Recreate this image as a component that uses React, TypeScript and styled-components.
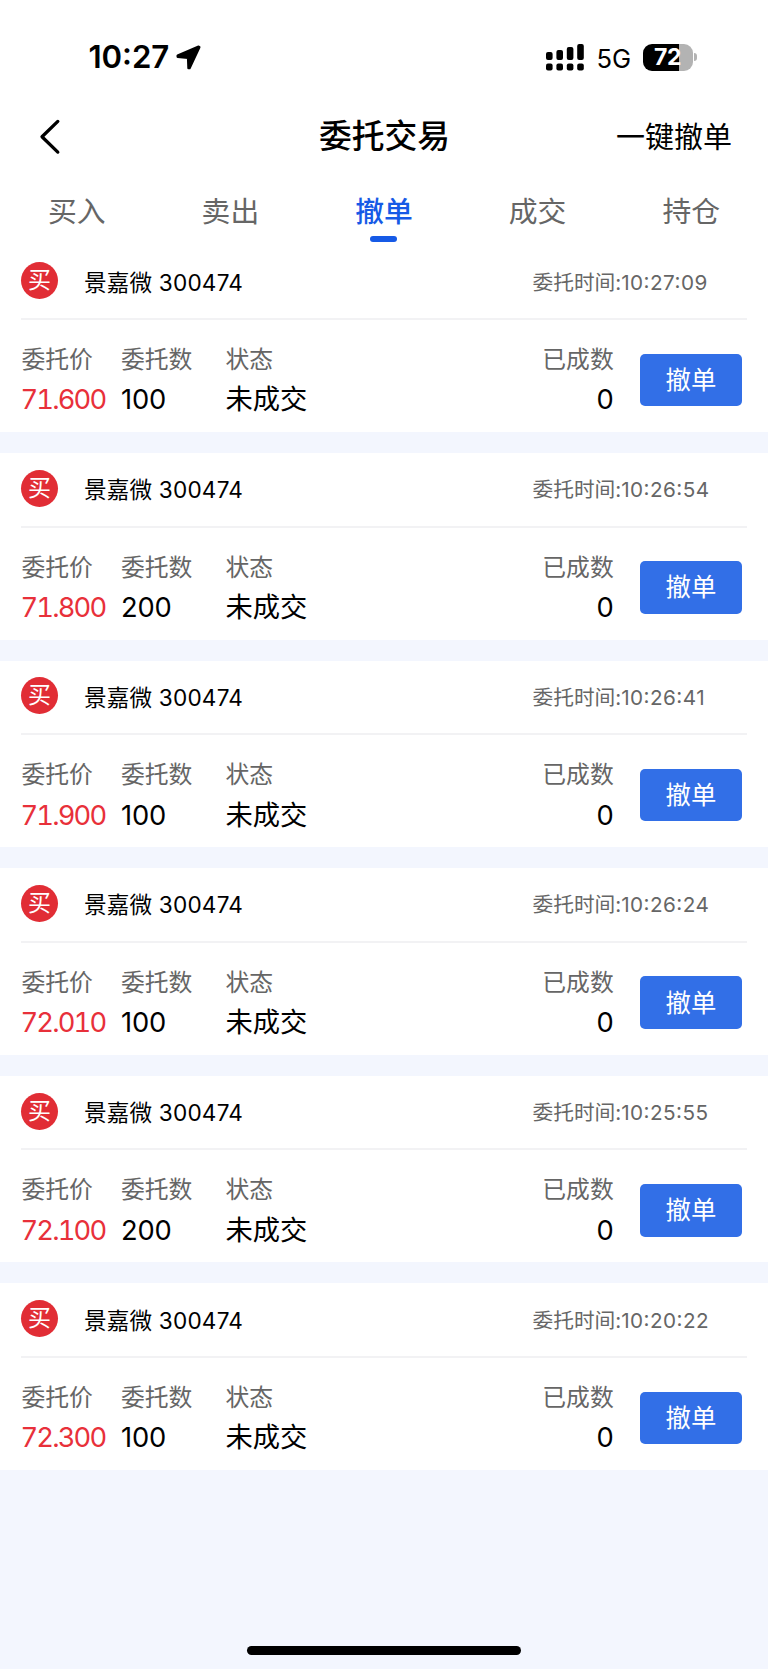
import React from 'react';
import styled, { createGlobalStyle } from 'styled-components';

const GlobalStyle = createGlobalStyle`
  * { box-sizing: border-box; }
  body {
    margin: 0;
    background: #f3f6fe;
    font-family: Inter, "Noto Sans CJK SC", sans-serif;
    color: #000;
  }
`;

const Screen = styled.div`
  display: flex;
  flex-direction: column;
  width: 768px;
  height: 1669px;
  background: #f3f6fe;
`;

const Top = styled.header`
  display: flex;
  flex-direction: column;
  height: 245.4px;
  flex: none;
  background: #fff;
`;

const StatusBar = styled.div`
  display: flex;
  align-items: center;
  height: 114px;
  padding-left: 88.5px;
  padding-right: 71px;
`;

const Clock = styled.span`
  font-size: 31.2px;
  font-weight: 600;
  line-height: 40px;
  width: 87.5px;
  letter-spacing: -0.1px;
  font-feature-settings: "case";
`;

const StatusRight = styled.div`
  display: flex;
  align-items: center;
  margin-left: auto;
`;

const Network = styled.span`
  font-size: 25.6px;
  line-height: 30px;
  margin: 3px 12px 0 13px;
  width: 34px;
  white-space: nowrap;
`;

const Battery = styled.div`
  display: flex;
  align-items: center;
  gap: 1.5px;
`;

const BatteryBody = styled.div`
  width: 50px;
  height: 27px;
  border-radius: 9px;
  background: linear-gradient(to right, #000 36px, #b3b3b3 36px);
  color: #fff;
  font-size: 23px;
  font-weight: 700;
  line-height: 27px;
  text-align: center;
  letter-spacing: -0.5px;
`;

const BatteryTip = styled.div`
  width: 3px;
  height: 8px;
  border-radius: 0 4px 4px 0;
  background: #b3b3b3;
`;

const NavBar = styled.div`
  display: grid;
  grid-template-columns: 1fr auto 1fr;
  align-items: center;
  height: 46px;
  margin-top: -2px;
  padding: 0 36px 0 37px;
`;

const Title = styled.h1`
  margin: -1px 0 0;
  font-size: 32.8px;
  font-weight: 500;
  line-height: 46px;
`;

const NavAction = styled.span`
  justify-self: end;
  font-size: 29px;
  line-height: 46px;
  padding-top: 3px;
`;

const Tabs = styled.nav`
  display: grid;
  grid-template-columns: repeat(5, 1fr);
  flex: 1;
  padding-top: 31px;
`;

const Tab = styled.div<{ $active?: boolean }>`
  display: flex;
  flex-direction: column;
  align-items: center;
  font-size: 28.8px;
  line-height: 46px;
  font-weight: ${(p) => (p.$active ? 500 : 400)};
  color: ${(p) => (p.$active ? '#165ae6' : '#666')};
`;

const Underline = styled.div`
  width: 27px;
  height: 6px;
  margin-top: 1px;
  border-radius: 3px;
  background: #165ae6;
`;

const List = styled.main`
  display: flex;
  flex-direction: column;
  gap: 21px;
`;

const Card = styled.section`
  height: 186.6px;
  padding: 0 21px;
  background: #fff;
`;

const CardHead = styled.div`
  display: flex;
  align-items: center;
  height: 74.6px;
  border-bottom: 2px solid #f2f2f4;
`;

const Badge = styled.span`
  width: 37px;
  height: 37px;
  margin: 0 26px 2px 0;
  border-radius: 50%;
  background: #e12d35;
  color: #fff;
  font-size: 23px;
  line-height: 37px;
  text-align: center;
`;

const Name = styled.span`
  padding-top: 2px;
  font-size: 22.6px;
  line-height: 34px;
  letter-spacing: 0.18px;
  white-space: nowrap;
`;

const Time = styled.span`
  margin-left: auto;
  padding-top: 2px;
  width: 214.5px;
  font-size: 20.7px;
  line-height: 34px;
  color: #666;
  white-space: nowrap;
`;

const TimeDigits = styled.span`
  letter-spacing: 0.45px;
  font-feature-settings: "case";
`;

const CardBody = styled.div`
  display: grid;
  grid-template-columns: 99.5px 104.5px 1fr auto 102px;
  padding: 20px 5px 0 0.5px;
`;

const Field = styled.div<{ $end?: boolean }>`
  display: flex;
  flex-direction: column;
  align-items: ${(p) => (p.$end ? 'flex-end' : 'flex-start')};
  margin-right: ${(p) => (p.$end ? '26.3px' : '0')};
`;

const Label = styled.span`
  font-size: 23.8px;
  line-height: 39.5px;
  color: #666;
`;

const Value = styled.span`
  margin-top: 1px;
  font-size: 27.3px;
  line-height: 39.5px;
  white-space: nowrap;
`;

const Quantity = styled(Value)`
  letter-spacing: -0.2px;
`;

const Price = styled(Value)`
  margin-left: -1px;
  color: #e8303a;
  font-feature-settings: "tnum";
  letter-spacing: -1.85px;
`;

const CancelButton = styled.button`
  width: 102px;
  height: 52.6px;
  margin-top: 13.6px;
  padding: 0;
  border: 0;
  border-radius: 5px;
  background: #326fe7;
  color: #fff;
  font-family: inherit;
  font-size: 25.4px;
  line-height: 52px;
`;

const HomeIndicator = styled.div`
  width: 274px;
  height: 9px;
  margin: auto auto 14.5px;
  border-radius: 5px;
  background: #000;
`;

const orders = [
  { price: '71.600', qty: 100, time: '10:27:09' },
  { price: '71.800', qty: 200, time: '10:26:54' },
  { price: '71.900', qty: 100, time: '10:26:41' },
  { price: '72.010', qty: 100, time: '10:26:24' },
  { price: '72.100', qty: 200, time: '10:25:55' },
  { price: '72.300', qty: 100, time: '10:20:22' },
];

const tabs = ['买入', '卖出', '撤单', '成交', '持仓'];

const LocationIcon = () => (
  <svg width="25" height="25" viewBox="0 0 25 25">
    <path
      d="M22.6 1.6 1.6 10.6v1.2L12 12.8 12.4 23.2h1.2L23.4 2.2Z"
      stroke="#000"
      strokeWidth="2.2"
      strokeLinejoin="round"
    />
  </svg>
);

const bars = [8, 6, 3, 0];
const SignalIcon = () => (
  <svg width="38" height="27" viewBox="0 0 38 27">
    {bars.map((top, i) => (
      <g key={top}>
        <rect x={i * 10.4} y={top} width="6.6" height={16 - top} rx="2" />
        <rect x={i * 10.4} y="19.6" width="6.6" height="7" rx="2" />
      </g>
    ))}
  </svg>
);

const BackIcon = () => (
  <svg width="26" height="36" viewBox="0 0 26 36" fill="none">
    <path d="M20.8 2.4 5 17.7l15.8 15.4" stroke="#000" strokeWidth="3.3" strokeLinecap="round" strokeLinejoin="round" />
  </svg>
);

export default function App() {
  return (
    <Screen>
      <GlobalStyle />
      <Top>
        <StatusBar>
          <Clock>10:27</Clock>
          <LocationIcon />
          <StatusRight>
            <SignalIcon />
            <Network>5G</Network>
            <Battery>
              <BatteryBody>72</BatteryBody>
              <BatteryTip />
            </Battery>
          </StatusRight>
        </StatusBar>
        <NavBar>
          <BackIcon />
          <Title>委托交易</Title>
          <NavAction>一键撤单</NavAction>
        </NavBar>
        <Tabs>
          {tabs.map((t) => (
            <Tab key={t} $active={t === '撤单'}>
              {t}
              {t === '撤单' && <Underline />}
            </Tab>
          ))}
        </Tabs>
      </Top>
      <List>
        {orders.map((o) => (
          <Card key={o.time}>
            <CardHead>
              <Badge>买</Badge>
              <Name>景嘉微 300474</Name>
              <Time>
                委托时间:<TimeDigits>{o.time}</TimeDigits>
              </Time>
            </CardHead>
            <CardBody>
              <Field>
                <Label>委托价</Label>
                <Price>{o.price}</Price>
              </Field>
              <Field>
                <Label>委托数</Label>
                <Quantity>{o.qty}</Quantity>
              </Field>
              <Field>
                <Label>状态</Label>
                <Value>未成交</Value>
              </Field>
              <Field $end>
                <Label>已成数</Label>
                <Value>0</Value>
              </Field>
              <CancelButton>撤单</CancelButton>
            </CardBody>
          </Card>
        ))}
      </List>
      <HomeIndicator />
    </Screen>
  );
}
